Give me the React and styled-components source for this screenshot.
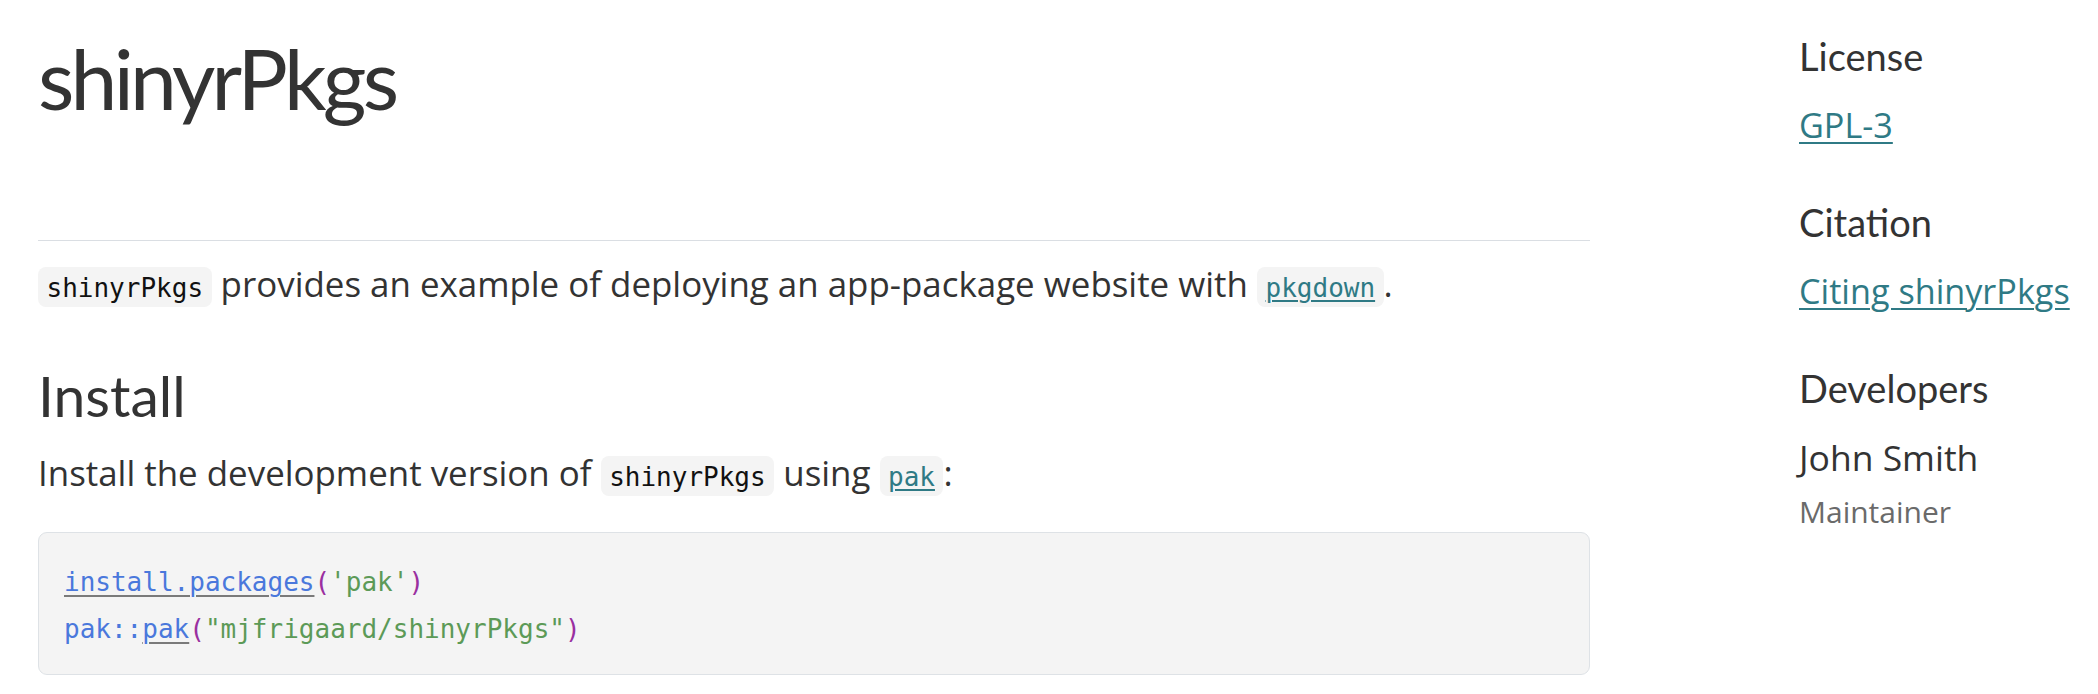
import React from "react";
import styled, { createGlobalStyle } from "styled-components";

const GlobalStyle = createGlobalStyle`
  body {
    margin: 0;
    background: #ffffff;
    color: #333333;
    font-family: "Open Sans", "Noto Sans", sans-serif;
  }
`;

const Page = styled.div`
  display: flex;
  flex-direction: row;
  align-items: flex-start;
  width: 2098px;
`;

const Main = styled.main`
  width: 1552px;
  padding: 30px 0 0 38px;
  flex-shrink: 0;
`;

const Title = styled.h1`
  margin: 0;
  font-family: "Lato", sans-serif;
  font-weight: 400;
  font-size: 84px;
  line-height: 96px;
  letter-spacing: -3.8px;
  color: #333333;
`;

const Rule = styled.hr`
  margin: 114px 0 0 0;
  border: 0;
  border-top: 1px solid #dadee3;
`;

const Para = styled.p`
  margin: ${p => p.top}px 0 0 0;
  font-size: 34.9px;
  line-height: 52px;
  color: #333333;
`;

const Code = styled.code`
  font-family: "DejaVu Sans Mono", monospace;
  font-size: 26px;
  background: #f4f4f4;
  border-radius: 8px;
  padding: 6px 8.5px 4px;
  color: #111111;
`;

const CodeLink = styled.a`
  color: #2f7a85;
  text-decoration: underline;
  text-decoration-thickness: 2px;
  text-underline-offset: 3px;
`;

const Heading = styled.h2`
  margin: 47px 0 0 0;
  font-family: "Lato", sans-serif;
  font-weight: 400;
  font-size: 57px;
  line-height: 68px;
  color: #333333;
`;

const Pre = styled.pre`
  margin: 29px 0 0 0;
  background: #f4f4f4;
  border: 1px solid #dee2e6;
  border-radius: 9px;
  padding: 26px 25px 21px;
  font-family: "DejaVu Sans Mono", monospace;
  font-size: 26px;
  line-height: 47px;
  color: #333333;
`;

const Line = styled.div``;

const Fn = styled.a`
  color: #4a78dc;
  text-decoration: ${p => (p.link ? "underline" : "none")};
  text-decoration-color: #7a7a7a;
  text-decoration-thickness: 2px;
  text-underline-offset: 4px;
`;

const Str = styled.span`
  color: #5c9a57;
`;

const Paren = styled.span`
  color: #9a2fa0;
`;

const Sidebar = styled.aside`
  margin-left: 209px;
  padding-top: 33px;
  display: flex;
  flex-direction: column;
  gap: 51px;
`;

const Section = styled.section`
  display: flex;
  flex-direction: column;
`;

const SideHeading = styled.h2`
  margin: 0 0 23px 0;
  font-family: "Lato", sans-serif;
  font-weight: 400;
  font-size: 38px;
  line-height: 46px;
  color: #333333;
`;

const SideLink = styled.a`
  font-size: 34.2px;
  line-height: 46px;
  color: #2f7a85;
  text-decoration: underline;
  text-decoration-thickness: 2px;
  text-underline-offset: 4px;
`;

const DevName = styled.div`
  font-size: 35.5px;
  line-height: 46px;
  color: #333333;
`;

const DevRole = styled.div`
  margin-top: 12px;
  font-size: 30px;
  line-height: 40px;
  color: #6a6a6a;
`;

export default function App() {
  return (
    <Page>
      <GlobalStyle />
      <Main>
        <Title>shinyrPkgs</Title>
        <Rule />
        <Para top={16.6}>
          <Code>shinyrPkgs</Code> provides an example of deploying an
          app-package website with{" "}
          <Code>
            <CodeLink href="#">pkgdown</CodeLink>
          </Code>
          .
        </Para>
        <Heading>Install</Heading>
        <Para top={18.7}>
          Install the development version of <Code>shinyrPkgs</Code> using{" "}
          <Code>
            <CodeLink href="#">pak</CodeLink>
          </Code>
          :
        </Para>
        <Pre>
          <Line>
            <Fn link href="#">install.packages</Fn>
            <Paren>(</Paren>
            <Str>'pak'</Str>
            <Paren>)</Paren>
          </Line>
          <Line>
            <Fn>pak::</Fn>
            <Fn link href="#">pak</Fn>
            <Paren>(</Paren>
            <Str>"mjfrigaard/shinyrPkgs"</Str>
            <Paren>)</Paren>
          </Line>
        </Pre>
      </Main>
      <Sidebar>
        <Section>
          <SideHeading>License</SideHeading>
          <div>
            <SideLink href="#">GPL-3</SideLink>
          </div>
        </Section>
        <Section>
          <SideHeading>Citation</SideHeading>
          <div>
            <SideLink href="#">Citing shinyrPkgs</SideLink>
          </div>
        </Section>
        <Section>
          <SideHeading>Developers</SideHeading>
          <DevName>John Smith</DevName>
          <DevRole>Maintainer</DevRole>
        </Section>
      </Sidebar>
    </Page>
  );
}
